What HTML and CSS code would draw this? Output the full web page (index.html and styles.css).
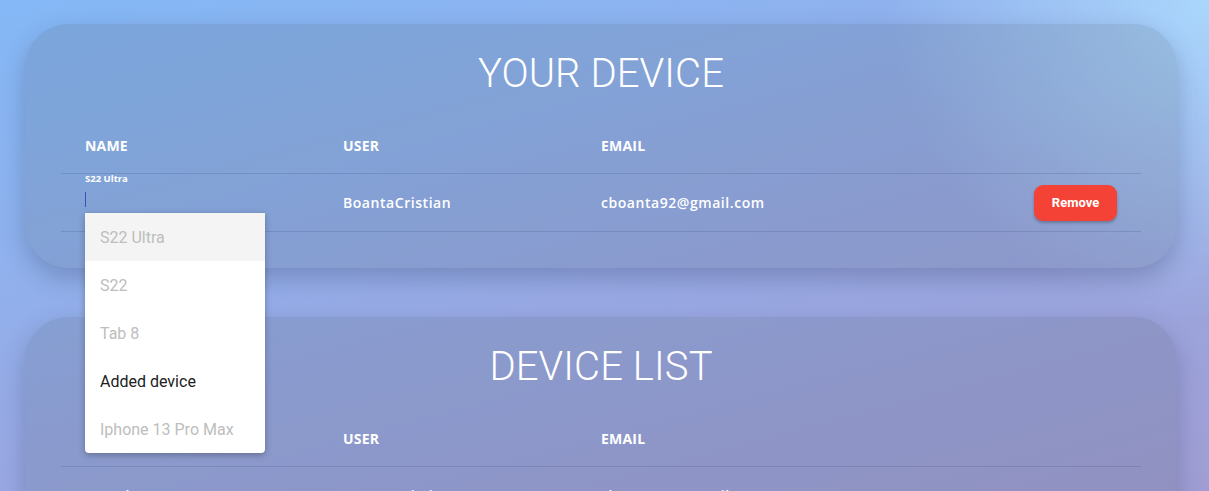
FILE: index.html
```html
<!DOCTYPE html>
<html lang="en">
<head>
<meta charset="utf-8">
<title>Devices</title>
<link rel="stylesheet" href="styles.css">
</head>
<body>
<main class="page">
  <section class="card">
    <h1 class="card-title">YOUR DEVICE</h1>
    <div class="table">
      <div class="row head">
        <div class="cell">NAME</div>
        <div class="cell">USER</div>
        <div class="cell">EMAIL</div>
        <div class="cell"></div>
      </div>
      <div class="row body">
        <div class="cell name-cell">
          <span class="float-label">S22 Ultra</span>
          <span class="caret"></span>
          <ul class="dropdown">
            <li class="opt disabled active">S22 Ultra</li>
            <li class="opt disabled">S22</li>
            <li class="opt disabled">Tab 8</li>
            <li class="opt">Added device</li>
            <li class="opt disabled">Iphone 13 Pro Max</li>
          </ul>
        </div>
        <div class="cell">BoantaCristian</div>
        <div class="cell">cboanta92@gmail.com</div>
        <div class="cell action"><button class="btn-remove">Remove</button></div>
      </div>
    </div>
  </section>

  <section class="card">
    <h1 class="card-title">DEVICE LIST</h1>
    <div class="table">
      <div class="row head">
        <div class="cell">NAME</div>
        <div class="cell">USER</div>
        <div class="cell">EMAIL</div>
        <div class="cell"></div>
      </div>
      <div class="row body">
        <div class="cell">S22 Ultra</div>
        <div class="cell">BoantaCristian</div>
        <div class="cell">cboanta92@gmail.com</div>
        <div class="cell"></div>
      </div>
    </div>
  </section>
</main>
</body>
</html>
```
FILE: styles.css
```css
html, body {
  margin: 0;
  padding: 0;
  height: 100%;
  overflow: hidden;
}
body {
  font-family: "Open Sans", "Liberation Sans", sans-serif;
  color: #fff;
  background:
    radial-gradient(circle at 100% 0%, #aad6fc 0, rgba(170,214,252,0) 320px),
    linear-gradient(165deg, #84b8f6 0%, #8fb2ee 30%, #98a9e4 55%, #a09ed4 100%);
  background-color: #94a8e6;
}
.page {
  display: flex;
  flex-direction: column;
  gap: 49px;
  padding: 24px 32px 0 25px;
}
.card {
  background: rgba(70, 80, 95, 0.16);
  border-radius: 44px;
  box-shadow: 0 10px 24px rgba(40, 50, 90, 0.28);
  padding: 26px 36px 36px 36px;
}
.card-title {
  margin: 0;
  text-align: center;
  font-family: Roboto, "Liberation Sans", sans-serif;
  font-weight: 300;
  font-size: 40px;
  line-height: 47px;
  letter-spacing: 0.1px;
}
.table {
  margin-top: 20px;
}
.row {
  display: grid;
  grid-template-columns: 258px 258px 258px 1fr;
  border-bottom: 1px solid rgba(60, 80, 120, 0.22);
}
.row.head {
  height: 56px;
  align-items: center;
  font-weight: 700;
  font-size: 14px;
  letter-spacing: 0.2px;
}
.row.body {
  height: 57px;
  align-items: center;
  font-size: 14px;
  font-weight: 600;
  letter-spacing: 0.55px;
}
.cell {
  padding: 0 24px;
}
.name-cell {
  position: relative;
  align-self: stretch;
}
.float-label {
  position: absolute;
  left: 24px;
  top: -2px;
  font-size: 9.5px;
  font-weight: 700;
  letter-spacing: 0;
}
.caret {
  position: absolute;
  left: 24px;
  top: 18px;
  width: 1px;
  height: 15px;
  background: #3f4fb2;
}
.dropdown {
  position: absolute;
  left: 24px;
  top: 39px;
  width: 180px;
  margin: 0;
  padding: 0;
  list-style: none;
  background: #fff;
  border-radius: 0 0 4px 4px;
  box-shadow: 0 2px 5px rgba(0,0,0,0.16), 0 2px 10px rgba(0,0,0,0.12);
  z-index: 5;
}
.opt {
  height: 48px;
  line-height: 50px;
  padding: 0 15px;
  font-family: Roboto, "Liberation Sans", sans-serif;
  font-size: 16px;
  font-weight: 400;
  letter-spacing: 0;
  color: #212121;
}
.opt.disabled {
  color: #bdbdbd;
}
.opt.active {
  background: #f4f4f4;
}
.action {
  display: flex;
  justify-content: flex-end;
}
.btn-remove {
  height: 36px;
  width: 83px;
  border: none;
  border-radius: 9px;
  background: #f44336;
  color: #fff;
  font-family: Roboto, "Liberation Sans", sans-serif;
  font-weight: 700;
  font-size: 13px;
  letter-spacing: 0;
  box-shadow: 0 2px 3px rgba(0,0,0,0.25);
  cursor: pointer;
}
```
